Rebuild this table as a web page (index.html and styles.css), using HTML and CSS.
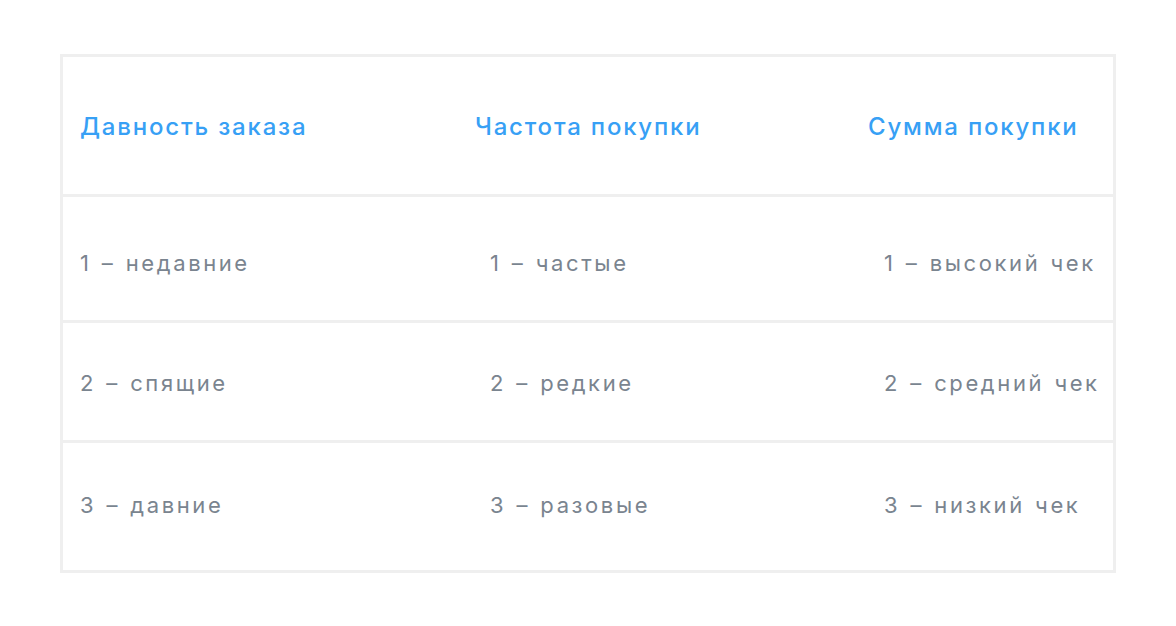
FILE: index.html
```html
<!DOCTYPE html>
<html lang="ru">
<head>
<meta charset="utf-8">
<link rel="stylesheet" href="styles.css">
</head>
<body>
<div class="page">
  <div class="rfm">
    <div class="row head">
      <div class="cell">Давность заказа</div>
      <div class="cell">Частота покупки</div>
      <div class="cell">Сумма покупки</div>
    </div>
    <div class="row body r1">
      <div class="cell">1 – недавние</div>
      <div class="cell">1 – частые</div>
      <div class="cell">1 – высокий чек</div>
    </div>
    <div class="row body r2">
      <div class="cell">2 – спящие</div>
      <div class="cell">2 – редкие</div>
      <div class="cell">2 – средний чек</div>
    </div>
    <div class="row body r3">
      <div class="cell">3 – давние</div>
      <div class="cell">3 – разовые</div>
      <div class="cell">3 – низкий чек</div>
    </div>
  </div>
</div>
</body>
</html>
```
FILE: styles.css
```css
html, body {
  margin: 0;
  padding: 0;
  background: #ffffff;
}
body {
  font-family: "Inter", "Noto Sans", sans-serif;
}
.page {
  padding: 54px 60px 0 60px;
}
.rfm {
  width: 1056px;
  box-sizing: border-box;
  background: #efefef;
  padding: 3px;
  display: flex;
  flex-direction: column;
  gap: 3px;
}
.row {
  background: #ffffff;
  display: grid;
  align-items: center;
  padding-left: 17px;
  white-space: nowrap;
  box-sizing: border-box;
}
.head {
  height: 137px;
  grid-template-columns: 395px 393px 1fr;
  color: #37a0f5;
  font-size: 24px;
  font-weight: 500;
  letter-spacing: 1.8px;
  padding-top: 2px;
}
.body {
  grid-template-columns: 410px 394px 1fr;
  color: #7a848f;
  font-size: 22px;
  font-weight: 400;
  letter-spacing: 2.6px;
  word-spacing: 1.5px;
}
.r1 { height: 123px; padding-top: 8px; }
.r2 { height: 117px; padding-top: 2px; }
.r3 { height: 127px; padding-bottom: 4px; }
```
